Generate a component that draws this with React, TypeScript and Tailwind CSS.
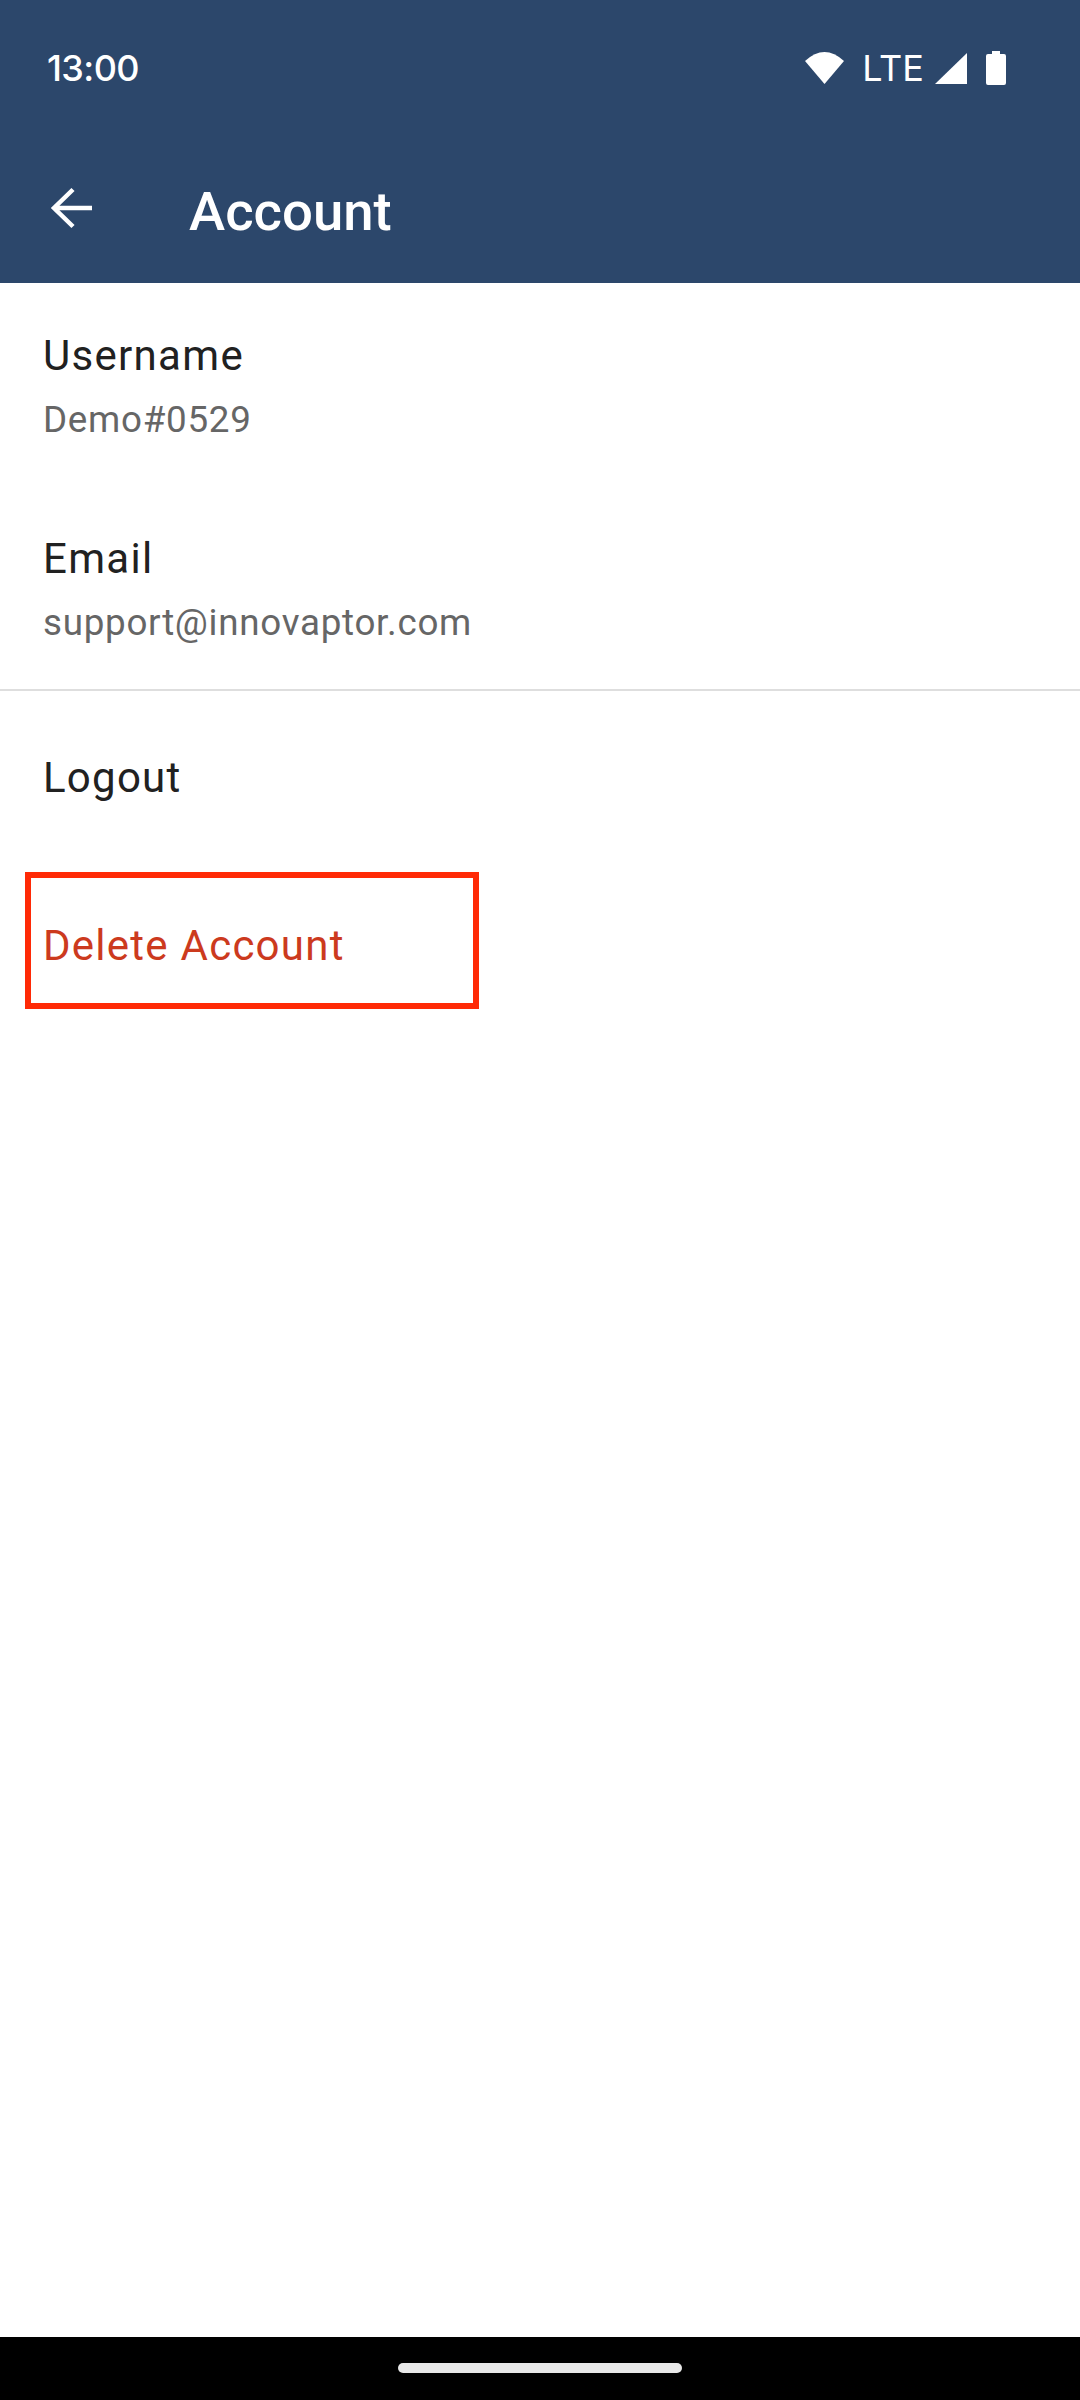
import { ReactNode } from 'react'

function StatusBar() {
  return (
    <div className="h-[136px] pl-[47px] pr-[74px] flex items-center justify-between text-white">
      <span className="text-[36px] leading-none font-medium font-['Inter',sans-serif] tracking-[-0.6px]">13:00</span>
      <div className="flex items-center">
        {/* wifi */}
        <svg width="39" height="32" viewBox="0 0 39 32" className="mr-[18px]" fill="white">
          <path d="M0 9 Q19.5 -9 39 9 L19.5 32 Z" />
        </svg>
        <span className="text-[36px] leading-none font-['Inter',sans-serif] mr-[11px]">LTE</span>
        {/* signal */}
        <svg width="32" height="31" viewBox="0 0 32 31" className="mr-[19px]" fill="white">
          <path d="M32 0 V31 H0 Z" />
        </svg>
        {/* battery */}
        <svg width="20" height="34" viewBox="0 0 20 34" fill="white">
          <path d="M6 0 H14 V3 H18 Q20 3 20 5 V32 Q20 34 18 34 H2 Q0 34 0 32 V5 Q0 3 2 3 H6 Z" />
        </svg>
      </div>
    </div>
  )
}

function AppBar() {
  return (
    <div className="h-[147px] pl-[48px] flex items-start text-white">
      <svg width="45" height="42" viewBox="0 0 45 42" fill="none" stroke="white" strokeWidth="4.5" className="mt-[51px]">
        <path d="M44 21 H7 M25 2.5 L6 21 L25 39.5" />
      </svg>
      <h1 className="ml-[96px] mt-[44px] text-[54.5px] leading-[62px] font-medium">Account</h1>
    </div>
  )
}

function Item({ label, value }: { label: string; value: string }) {
  return (
    <div className="h-[203px] pl-[43px] pt-[45px]">
      <div className="text-[42px] leading-[56px] tracking-[1.3px] text-[#212121]">{label}</div>
      <div className="mt-[12px] text-[36.75px] leading-[48px] tracking-[0.72px] text-[#666666]">{value}</div>
    </div>
  )
}

function Action({ children, className }: { children: ReactNode; className: string }) {
  return <div className={`pl-[43px] text-[42px] leading-[56px] tracking-[1.25px] ${className}`}>{children}</div>
}

export default function App() {
  return (
    <div className="w-[1080px] h-[2400px] bg-white flex flex-col font-['Roboto',sans-serif]">
      <header className="bg-[#2c476b]">
        <StatusBar />
        <AppBar />
      </header>
      <main className="flex-1">
        <Item label="Username" value="Demo#0529" />
        <Item label="Email" value="support@innovaptor.com" />
        <div className="h-[2px] bg-[#dedede]" />
        <Action className="mt-[59px] text-[#212121]">Logout</Action>
        <div className="relative mt-[112px]">
          <Action className="text-[#cc3a1e]">Delete Account</Action>
          {/* highlight box */}
          <div className="absolute left-[25px] top-[-46px] w-[454px] h-[137px] border-[6px] border-[#ff2a06]" />
        </div>
      </main>
      <div className="h-[63px] bg-black flex justify-center pt-[26px]">
        <div className="w-[284px] h-[10px] rounded-full bg-[#e8e8e8]" />
      </div>
    </div>
  )
}
